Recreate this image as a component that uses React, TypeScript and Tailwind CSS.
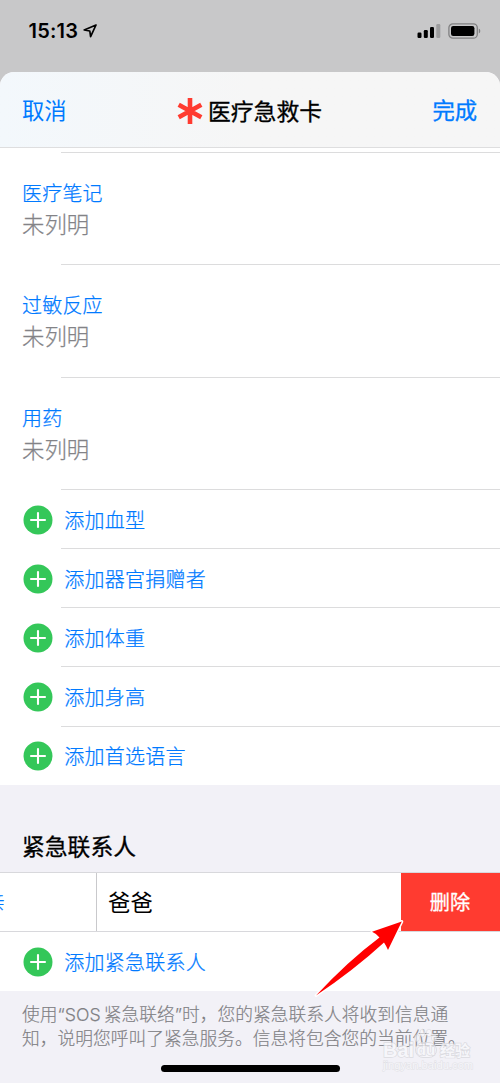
import React from "react";

function PlusBadge() {
  return (
    <svg viewBox="0 0 30 30" className="h-[30px] w-[30px] shrink-0">
      <circle cx="15" cy="15" r="14.5" fill="#34c759" />
      <path d="M15 8v14M8 15h14" stroke="#fff" strokeWidth="2.1" strokeLinecap="round" />
    </svg>
  );
}

function Field({ label }: { label: string }) {
  return (
    <div className="relative h-[112.4px] pt-[25px] pl-[22px]">
      <div className="text-[20px] leading-[30px] tracking-[0.2px] text-[#007aff]">{label}</div>
      <div className="text-[22.4px] leading-[31px] text-[#838387]">未列明</div>
      <Separator />
    </div>
  );
}

function Separator() {
  return <div className="absolute right-0 bottom-0 left-[61px] h-px bg-[#dcdcdd]" />;
}

function AddRow({ label, last = false }: { label: string; last?: boolean }) {
  return (
    <div className="relative flex h-[59.1px] items-center pl-[22.6px]">
      <PlusBadge />
      <span className="ml-[11.7px] text-[20px] leading-[30px] tracking-[0.25px] text-[#007aff]">{label}</span>
      {!last && <Separator />}
    </div>
  );
}

function StatusBar() {
  return (
    <div className="flex h-[72px] shrink-0 items-start justify-between pt-[19px] pr-[18.5px] pl-[28.5px]">
      <div className="flex items-center">
        <span className="font-['Inter','Liberation_Sans',sans-serif] text-[20px] leading-[24px] font-semibold tracking-[0.2px]">
          15:13
        </span>
        <svg viewBox="0 0 14 14" className="ml-[5px] h-[14px] w-[14px]">
          <path d="M13 1 1.2 6l5.6 1 .8 5.6z" fill="none" stroke="#000" strokeWidth="1.7" strokeLinejoin="round" />
        </svg>
      </div>
      <div className="flex items-center pt-[4px]">
        <svg viewBox="0 0 24 16" className="h-[16px] w-[24px]">
          <rect x="0.5" y="9.5" width="4" height="5.5" rx="1.2" />
          <rect x="6.8" y="7" width="4" height="8" rx="1.2" />
          <rect x="13" y="4" width="4" height="11" rx="1.2" />
          <rect x="19.3" y="1" width="4" height="14" rx="1.2" fill="#9c9c9d" />
        </svg>
        <svg viewBox="0 0 34 16" className="ml-[7px] h-[16px] w-[34px]">
          <rect x="0.9" y="0.8" width="28.4" height="14.4" rx="4" fill="none" stroke="#808081" strokeWidth="1.3" />
          <rect x="3" y="3" width="23.4" height="10" rx="2.2" />
          <path d="M30.8 5.5c2 1 2 4 0 5z" fill="#808081" />
        </svg>
      </div>
    </div>
  );
}

function Header() {
  return (
    <div className="flex h-[76px] shrink-0 items-center justify-between rounded-t-[14px] border-b border-[#dededf] bg-[#f6f6f6] bg-linear-to-r from-[#f3f8fc] to-[#f6f6f6] to-50% pr-[23px] pl-[22px]">
      <span className="pb-[2px] text-[22.3px] leading-[32px] text-[#007aff]">取消</span>
      <div className="flex items-center pt-[3px]">
        <svg viewBox="0 0 26 26" className="h-[26px] w-[26px]">
          <path d="M13 0v26M1.7 6.8l22.6 12.4M24.3 6.8 1.7 19.2" stroke="#ff3b30" strokeWidth="4.6" />
        </svg>
        <span className="ml-[5px] text-[22.8px] leading-[32px] [-webkit-text-stroke:0.3px]">医疗急救卡</span>
      </div>
      <span className="pb-[2px] text-[22.3px] leading-[32px] text-[#007aff] [-webkit-text-stroke:0.35px]">完成</span>
    </div>
  );
}

function Watermark() {
  return (
    <div className="absolute top-[1028px] left-[383px] w-[92px] font-['Liberation_Sans',sans-serif] text-[#f8f8fb] opacity-80">
      <svg
        viewBox="0 0 26 18"
        className="absolute top-0 left-[29px] h-[18px] w-[26px]"
        fill="#fafafc"
        fillOpacity="0.7"
        stroke="#d4d4d9"
        strokeWidth="0.6"
      >
        <ellipse cx="5" cy="10" rx="2.5" ry="3.5" />
        <ellipse cx="10.5" cy="5" rx="2.6" ry="3.8" />
        <ellipse cx="17" cy="5" rx="2.6" ry="3.8" />
        <ellipse cx="22" cy="10" rx="2.5" ry="3.5" />
      </svg>
      <div className="flex h-[32px] items-center pt-[11px] text-[20px] leading-[20px] font-bold [-webkit-text-stroke:1.4px_#d6d6db] [paint-order:stroke_fill]">
        <span className="w-[32px]">Bai</span>
        <span className="flex h-[16px] w-[22px] items-center justify-center rounded-[8px] border border-[#d9d9de] bg-[#f8f8fb]/80 text-[15px]">
          du
        </span>
        <span className="ml-[3px] font-['Noto_Sans_CJK_SC',sans-serif] text-[15px] leading-[20px]">经验</span>
      </div>
      <div className="text-[11.2px] leading-[11px] whitespace-nowrap [-webkit-text-stroke:1px_#dddde2] [paint-order:stroke_fill]">
        jingyan.baidu.com
      </div>
    </div>
  );
}

export default function App() {
  return (
    <div className="relative flex h-[1083px] w-[500px] flex-col overflow-hidden bg-[#c8c8c9] font-['Noto_Sans_CJK_SC',sans-serif] text-black">
      <StatusBar />
      <div className="flex flex-1 flex-col overflow-hidden rounded-t-[14px] bg-[#f2f1f7]">
        <Header />
        <div className="relative h-[5px] shrink-0 bg-white">
          <Separator />
        </div>
        <div className="h-[632.3px] shrink-0 bg-white font-light [-webkit-text-stroke:0.25px]">
          <Field label="医疗笔记" />
          <Field label="过敏反应" />
          <Field label="用药" />
          <AddRow label="添加血型" />
          <AddRow label="添加器官捐赠者" />
          <AddRow label="添加体重" />
          <AddRow label="添加身高" />
          <AddRow label="添加首选语言" last />
        </div>
        <div className="h-[86.7px] shrink-0 pt-[43.4px] pl-[22px] text-[22.8px] leading-[34px] [-webkit-text-stroke:0.3px]">
          紧急联系人
        </div>
        <div className="flex h-[60px] shrink-0 border-y border-[#d8d8dc] bg-white">
          <div className="flex w-[97px] items-center overflow-hidden border-r border-[#c9c9cc]">
            <span className="-ml-[35px] text-[20px] leading-[30px] font-light text-[#007aff] [-webkit-text-stroke:0.25px]">
              父亲
            </span>
          </div>
          <div className="flex flex-1 items-center pb-[2px] pl-[11px] text-[22.4px] leading-[32px]">爸爸</div>
          <div className="flex w-[99px] items-center justify-center bg-[#ff3b30] pr-[1px] text-[20.2px] leading-[30px] text-white [-webkit-text-stroke:0.3px]">
            删除
          </div>
        </div>
        <div className="shrink-0 bg-white font-light [-webkit-text-stroke:0.25px]">
          <AddRow label="添加紧急联系人" last />
        </div>
        <div className="pt-[10px] pl-[22px] text-[17.75px] leading-[24px] font-light whitespace-nowrap text-[#808084] [-webkit-text-stroke:0.15px]">
          <div className="h-[24px]">
            使用<span className="font-['Inter',sans-serif]">“SOS</span>
            <span className="ml-[3px]">紧急联络</span>
            <span className="font-['Inter',sans-serif]">”</span>时，您的紧急联系人将收到信息通
          </div>
          <div className="h-[24px]">知，说明您呼叫了紧急服务。信息将包含您的当前位置。</div>
        </div>
      </div>
      <Watermark />
      <div className="absolute top-[1065px] left-[161px] h-[7px] w-[179px] rounded-full bg-black" />
      <svg viewBox="0 0 100 85" className="absolute top-[915px] left-[310px] h-[85px] w-[100px]">
        <path
          d="M6 80.5 Q38 46 69.5 22.5 Q67 19 62 16.8 L91.8 6.5 L78 35 Q76 30.5 74 27.5 Q44 55 6 80.5 Z"
          fill="#f00"
          stroke="#fff"
          strokeWidth="3"
          strokeLinejoin="round"
          paintOrder="stroke"
        />
      </svg>
    </div>
  );
}
